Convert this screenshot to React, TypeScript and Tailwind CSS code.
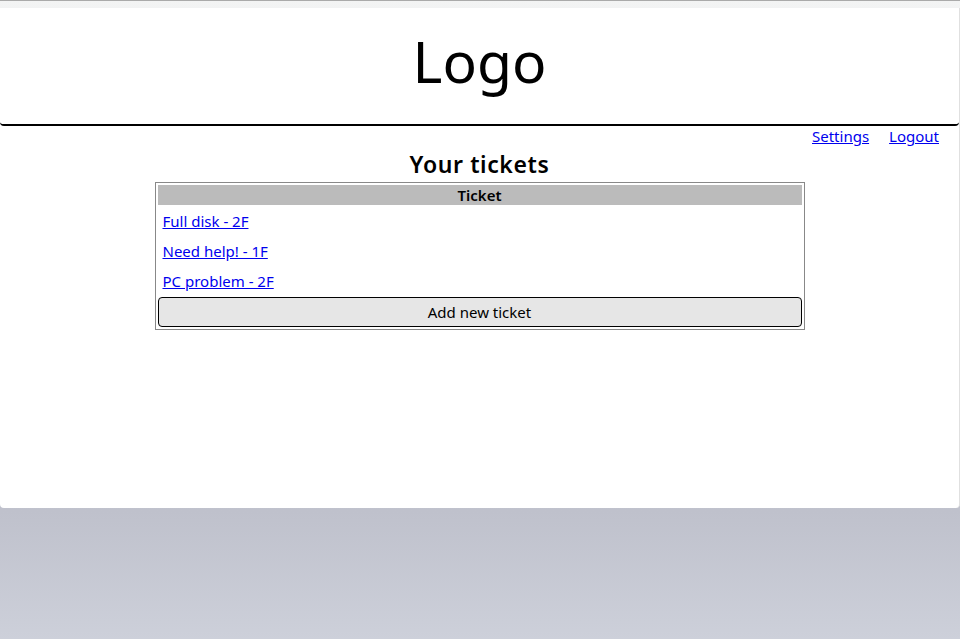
const tickets = [
  { id: 1, title: 'Full disk - 2F' },
  { id: 2, title: 'Need help! - 1F' },
  { id: 3, title: 'PC problem - 2F' },
]

export default function App() {
  return (
    <div
      className="min-h-[639px] bg-gradient-to-b from-[#f3f4f4] from-0% via-[#bfc1cc] via-80% to-[#cdd0da] border-t border-[#aaaaaa] pt-[7px] text-black"
      style={{ fontFamily: '"Noto Sans", "Open Sans", sans-serif' }}
    >
      <div className="h-[500px] bg-white rounded-b-[4px] border-r border-[#e0e0e0]">
        <header className="h-[118px] border-b-2 border-black rounded-b-[4px] flex items-center justify-center">
          <h1 className="text-[57px] leading-none pb-[10px]">Logo</h1>
        </header>

        <nav className="flex justify-end gap-5 pr-5 h-[21px] items-center text-[15px]">
          <a href="#" className="text-[#0000ee] underline">Settings</a>
          <a href="#" className="text-[#0000ee] underline">Logout</a>
        </nav>

        <h2 className="text-center text-[23px] font-semibold tracking-[0.6px] leading-[35px]">Your tickets</h2>

        <div className="mx-auto w-[650px] border border-[#888888] p-[2px] flex flex-col gap-[2px] text-[15px]">
          <div className="h-5 bg-[#bbbbbb] flex items-center justify-center font-semibold">Ticket</div>
          {tickets.map((t) => (
            <div key={t.id} className="h-7 flex items-center px-[5px]">
              <a href="#" className="text-[#0000ee] underline">{t.title}</a>
            </div>
          ))}
          <button
            type="button"
            className="h-[30px] bg-[#e6e6e6] border border-black rounded-[4px] text-[15px]"
          >
            Add new ticket
          </button>
        </div>
      </div>
    </div>
  )
}
